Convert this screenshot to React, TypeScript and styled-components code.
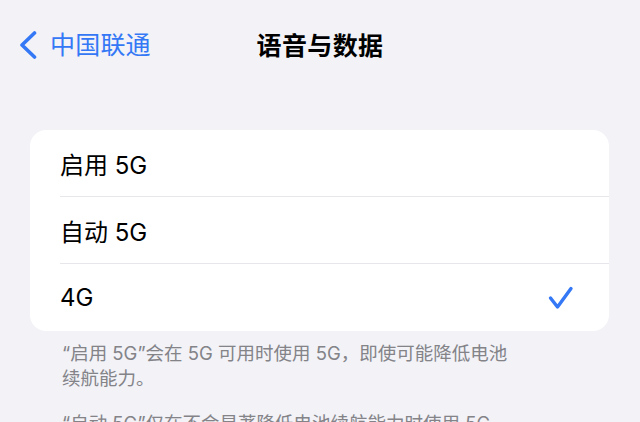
import React from 'react'
import styled, { createGlobalStyle } from 'styled-components'

const GlobalStyle = createGlobalStyle`
  html, body {
    margin: 0;
    padding: 0;
    background: #f2f2f7;
  }
  body {
    font-family: "Inter", "Noto Sans CJK SC", sans-serif;
    -webkit-font-smoothing: antialiased;
  }
`

const options = ['启用 5G', '自动 5G', '4G']
const selected = 2

const App = () => {
  return (
    <Screen>
      <GlobalStyle />
      <NavBar>
        <BackButton>
          <svg width="18" height="28" viewBox="0 0 18 28">
            <path
              d="M15.5 2 L3 14 L15.5 26"
              fill="none"
              stroke="#3478f6"
              strokeWidth="3.6"
              strokeLinecap="round"
              strokeLinejoin="round"
            />
          </svg>
          <BackLabel>中国联通</BackLabel>
        </BackButton>
        <Title>语音与数据</Title>
        <span />
      </NavBar>

      <Card>
        {options.map((label, i) => (
          <Row key={label}>
            <RowInner $last={i === options.length - 1}>
              <RowLabel>{label}</RowLabel>
              {i === selected && (
                <svg width="26" height="24" viewBox="0 0 26 24">
                  <path
                    d="M2.5 12 L9.5 21 L23 2.5"
                    fill="none"
                    stroke="#3478f6"
                    strokeWidth="3.4"
                    strokeLinecap="round"
                    strokeLinejoin="round"
                  />
                </svg>
              )}
            </RowInner>
          </Row>
        ))}
      </Card>

      <Footer>
        <FooterText>“启用 5G”会在 5G 可用时使用 5G，即使可能降低电池续航能力。</FooterText>
        <FooterText>“自动 5G”仅在不会显著降低电池续航能力时使用 5G。</FooterText>
      </Footer>
    </Screen>
  )
}

const Screen = styled.div`
  width: 640px;
  height: 422px;
  overflow: hidden;
  background: #f2f2f7;
`

const NavBar = styled.div`
  display: grid;
  grid-template-columns: 1fr auto 1fr;
  align-items: center;
  height: 90px;
  padding: 0 19px;
  box-sizing: border-box;
`

const BackButton = styled.div`
  display: flex;
  align-items: center;
  gap: 13px;
  color: #3478f6;
  margin-top: -1px;
`

const BackLabel = styled.span`
  font-size: 25px;
  line-height: 30px;
  letter-spacing: 0.2px;
`

const Title = styled.div`
  font-size: 25px;
  font-weight: 600;
  line-height: 30px;
  color: #000;
  letter-spacing: 0.4px;
  margin-top: 1px;
`

const Card = styled.div`
  margin: 40px 31px 0 30px;
  background: #fff;
  border-radius: 16px;
  overflow: hidden;
`

const Row = styled.div`
  padding-left: 30px;
`

const RowInner = styled.div<{ $last?: boolean }>`
  display: flex;
  align-items: center;
  justify-content: space-between;
  height: 67px;
  padding-right: 35px;
  box-sizing: border-box;
  border-bottom: ${(p) => (p.$last ? 'none' : '1.5px solid #e6e6eb')};
`

const RowLabel = styled.span`
  font-size: 24px;
  color: #000;
`

const Footer = styled.div`
  display: flex;
  flex-direction: column;
  gap: 20px;
  padding: 10px 0 0 62px;
`

const FooterText = styled.p`
  margin: 0;
  max-width: 458px;
  font-size: 18.5px;
  line-height: 25px;
  color: #838388;
`

export default App
